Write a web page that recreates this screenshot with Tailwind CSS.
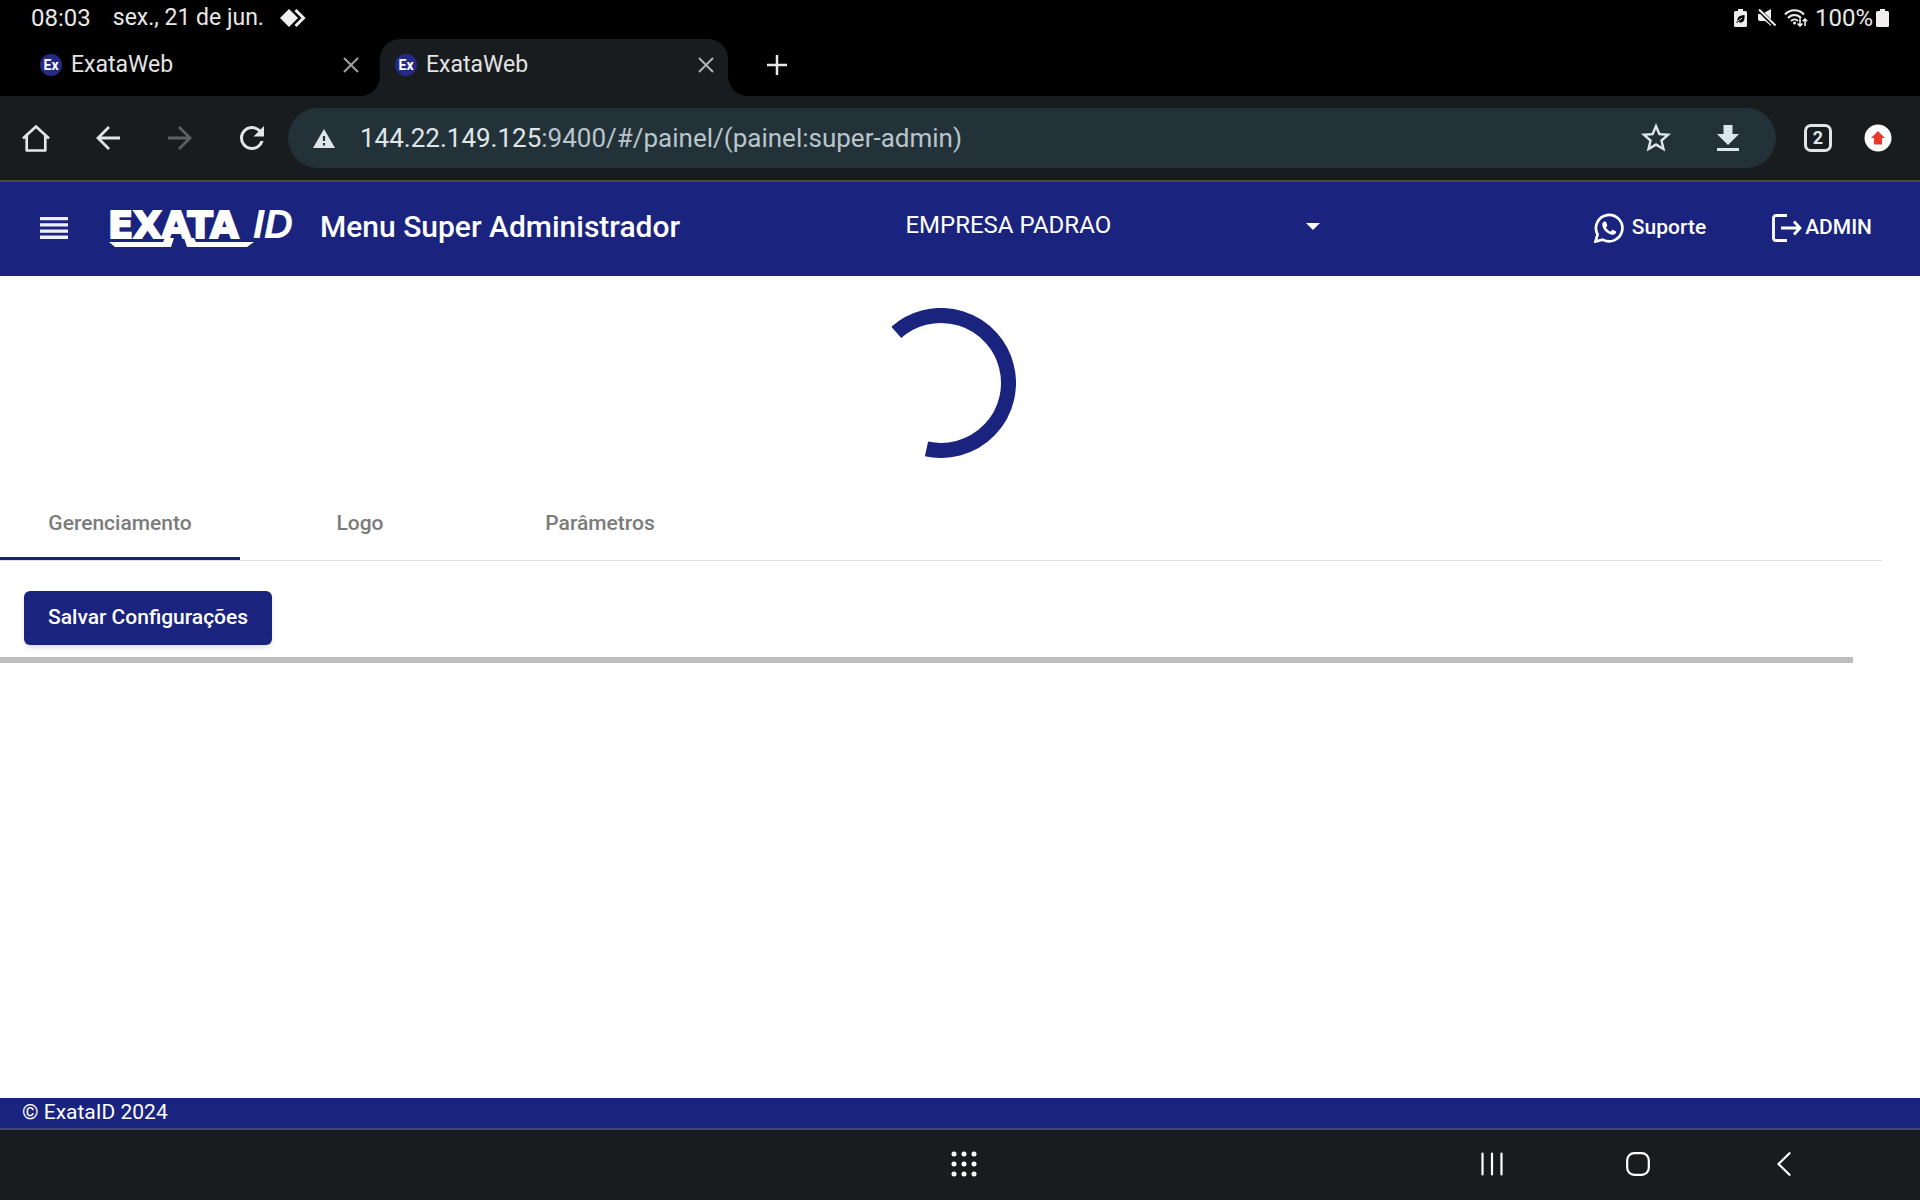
<!DOCTYPE html>
<html lang="pt-BR">
<head>
<meta charset="utf-8">
<title>ExataWeb</title>
<script src="https://cdn.jsdelivr.net/npm/@tailwindcss/browser@4"></script>
</head>
<body class="flex min-h-screen flex-col bg-white font-['Roboto',sans-serif]">

<!-- System status bar -->
<div class="flex h-[38px] items-center bg-black pr-[31px] pb-0.5 pl-[31px] text-2xl leading-9 text-[#e8e8e8]">
  <span>08:03</span>
  <span class="ml-[22px] text-[23px]">sex., 21 de jun.</span>
  <svg class="ml-4 h-5 w-[26px]" viewBox="0 0 26 20" aria-hidden="true">
    <path d="M9 1 18 10 9 19 0 10z" fill="#f0f0f0"/>
    <path d="M15.500 2 23.500 10 15.500 18" fill="none" stroke="#f0f0f0" stroke-width="3"/>
  </svg>
  <div class="ml-auto flex items-center">
    <svg class="h-[18px] w-[13px]" viewBox="0 0 13 18" aria-hidden="true">
      <path d="M4 0h5v2h2.500a1.500 1.500 0 0 1 1.500 1.500v13a1.500 1.500 0 0 1-1.500 1.500h-10a1.500 1.500 0 0 1-1.500-1.500v-13a1.500 1.500 0 0 1 1.500-1.500H4z" fill="#eee"/>
      <path d="M10.500 6c.5 5-1 7.500-4 7.500-1 0-1.800-.3-2.300-.8L3 14l-.8-.8 1.300-1.500C3 8 6 6.300 10.500 6z" fill="#000"/>
      <path d="M3.500 12.500 8 9" stroke="#eee"/>
    </svg>
    <svg class="ml-[11px] h-[18px] w-[18px]" viewBox="0 0 18 18" aria-hidden="true">
      <path d="M0 5h4l9-5v17L7 12H2a2 2 0 0 1-2-2z" fill="#eee"/>
      <path d="M1 1 17 17" stroke="#000" stroke-width="4"/>
      <path d="M1 .5 17.500 16.500" stroke="#eee" stroke-width="2"/>
    </svg>
    <svg class="ml-2 h-[18px] w-6" viewBox="0 0 24 18" fill="none" stroke="#eee" stroke-width="2" aria-hidden="true">
      <path d="M1 5.500C6-.2 15-.2 20 5.500M4 9c3.500-4 9.500-4 13 0M7 12c2-2 5-2 7 0"/>
      <circle cx="10.500" cy="14" r="1.500" fill="#eee" stroke="none"/>
      <path d="M16 9.500v7.500M13.500 14.500l2.500 2.500 2.500-2.500M21 17V10M18.800 12.200 21 10l2.200 2.200" stroke-width="1.600"/>
    </svg>
    <span class="ml-[7px]">100%</span>
    <svg class="ml-[3px] h-[18px] w-[13px]" viewBox="0 0 13 18" aria-hidden="true">
      <path d="M4 0h5v2h2.500a1.500 1.500 0 0 1 1.500 1.500v13a1.500 1.500 0 0 1-1.500 1.500h-10a1.500 1.500 0 0 1-1.500-1.500v-13a1.500 1.500 0 0 1 1.500-1.500H4z" fill="#eee"/>
    </svg>
  </div>
</div>

<!-- Browser tab strip -->
<div class="flex h-[58px] items-stretch gap-[7px] bg-black pl-[25px] text-[23px] text-[#e3e3e3]">
  <div class="flex w-[348px] items-center px-[14px] pb-1">
    <span class="ml-px flex size-[22px] items-center justify-center rounded-full bg-[#252a86] text-sm font-bold text-white">Ex</span>
    <span class="ml-[9px]">ExataWeb</span>
    <button class="ml-auto" aria-label="Fechar guia"><svg class="size-4" viewBox="0 0 16 16" stroke="#a0a0a0" stroke-width="2"><path d="M1 1 15 15M15 1 1 15"/></svg></button>
  </div>
  <div class="relative mt-px flex w-[348px] items-center rounded-t-[20px] bg-[#191c1f] px-[14px] pb-[5px]">
    <svg class="absolute bottom-0 -left-5 size-5" viewBox="0 0 20 20" aria-hidden="true"><path d="M20 0v20H0A20 20 0 0 0 20 0z" fill="#191c1f"/></svg>
    <svg class="absolute -right-5 bottom-0 size-5" viewBox="0 0 20 20" aria-hidden="true"><path d="M0 0v20h20A20 20 0 0 1 0 0z" fill="#191c1f"/></svg>
    <span class="ml-px flex size-[22px] items-center justify-center rounded-full bg-[#252a86] text-sm font-bold text-white">Ex</span>
    <span class="ml-[9px]">ExataWeb</span>
    <button class="ml-auto" aria-label="Fechar guia"><svg class="size-4" viewBox="0 0 16 16" stroke="#b0b3b5" stroke-width="2"><path d="M1 1 15 15M15 1 1 15"/></svg></button>
  </div>
  <button class="ml-8 pb-1" aria-label="Nova guia"><svg class="size-5" viewBox="0 0 20 20" stroke="#e8e8e8" stroke-width="2.500"><path d="M10 0v20M0 10h20"/></svg></button>
</div>

<!-- Browser toolbar -->
<div class="flex h-[86px] items-center border-b-2 border-[#464b4a] bg-[#191c1f] pr-6">
  <button class="flex w-[72px] justify-center" aria-label="Início"><svg class="size-7" viewBox="0 0 28 28" fill="none" stroke="#e0e6ea" stroke-width="2.700" stroke-linejoin="round"><path d="M1 14.500 14 2.500l13 12M4.700 12v14.500h18.600V12"/></svg></button>
  <button class="flex w-[72px] justify-center" aria-label="Voltar"><svg class="size-6" viewBox="0 0 24 24" fill="none" stroke="#e0e6ea" stroke-width="2.800"><path d="M24 12H2M13 1 2 12 13 23"/></svg></button>
  <button class="flex w-[72px] justify-center" aria-label="Avançar"><svg class="size-6" viewBox="0 0 24 24" fill="none" stroke="#5c6163" stroke-width="2.800"><path d="M0 12h22M11 1l11 11L11 23"/></svg></button>
  <button class="flex w-[72px] justify-center" aria-label="Recarregar"><svg class="size-[36px]" viewBox="0 0 24 24" fill="#e0e6ea"><path d="M17.650 6.350A7.960 7.960 0 0 0 12 4a8 8 0 1 0 7.730 10h-2.080A6 6 0 1 1 12 6c1.660 0 3.140.69 4.220 1.780L13 11h7V4z"/></svg></button>
  <div class="flex h-[60px] flex-1 items-center rounded-full bg-[#233238] pr-3 pl-6">
    <svg class="h-[19px] w-6 shrink-0" viewBox="0 0 24 19" aria-hidden="true"><path d="M12 0 23 19H1z" fill="#dfe6ea"/><path d="M12 7v5M12 14v2.500" stroke="#233238" stroke-width="2.200"/></svg>
    <div role="textbox" contenteditable="true" aria-label="Endereço" class="ml-6 flex-1 text-[26px] leading-9 text-[#b9c5cb]"><span class="text-[#e0e6ea]">144.22.149.125</span>:9400/#/painel/(painel:super-admin)</div>
    <button class="flex w-[72px] justify-center" aria-label="Favoritar"><svg class="size-[36px]" viewBox="0 0 24 24" fill="#dfe6ea"><path d="M22 9.240l-7.190-.62L12 2 9.190 8.630 2 9.240l5.460 4.730L5.820 21 12 17.270 18.180 21l-1.630-7.030L22 9.240zM12 15.400l-3.760 2.270 1-4.280-3.320-2.880 4.380-.38L12 6.100l1.710 4.040 4.380.38-3.320 2.880 1 4.280L12 15.400z"/></svg></button>
    <button class="flex w-[72px] justify-center" aria-label="Baixar"><svg class="h-[26px] w-[22px]" viewBox="0 0 22 26" fill="#dfe6ea"><path d="M6.500 0h9v9H22L11 20 0 9h6.500zM0 23h22v3H0z"/></svg></button>
  </div>
  <button class="flex w-[84px] justify-center" aria-label="Guias abertas"><span class="flex h-7 w-7 items-center justify-center rounded-[7px] border-3 border-[#dfe6ea] text-lg font-bold text-[#dfe6ea]">2</span></button>
  <button class="flex w-9 justify-center" aria-label="Atualização disponível"><svg class="size-7" viewBox="0 0 28 28"><circle cx="14" cy="14" r="13.500" fill="#fff"/><path d="M14 7 21 14h-3v6.500h-8V14H7z" fill="#e8392c"/></svg></button>
</div>

<!-- Application header -->
<header class="flex h-[94px] items-center bg-[#1a237e] pb-0.5 text-white">
  <div class="flex w-[47%] items-center pl-10">
    <button aria-label="Menu"><svg class="h-[22px] w-7" viewBox="0 0 28 22" fill="#eef1fb"><path d="M0 0h28v3.300H0zM0 6.200h28v3.300H0zM0 12.400h28v3.300H0zM0 18.600h28v3.300H0z"/></svg></button>
    <svg class="ml-9 h-[72px] w-[200px]" viewBox="-4 -16 200 72" role="img" aria-label="EXATAID" fill="#fff">
      <text x="0" y="30" stroke="#fff" stroke-width="2" class="font-['DejaVu_Sans',sans-serif] text-[37px] font-bold">EXATA</text>
      <text x="145" y="30" class="font-['Liberation_Sans',sans-serif] text-[40px] font-bold italic">ID</text>
      <path d="M1 34h54l2-4h9l-3 9H7zM76 30h10l2 4h58l-7 5H79z"/>
    </svg>
    <h1 class="ml-4 pb-0.5 text-3xl font-medium whitespace-nowrap">Menu Super Administrador</h1>
  </div>
  <div class="relative w-[22%] pb-1.5">
    <select aria-label="Empresa" class="w-full appearance-none bg-transparent pl-[3px] text-2xl"><option>EMPRESA PADRAO</option></select>
    <svg class="pointer-events-none absolute top-[14px] right-[5px] h-[7px] w-[14px]" viewBox="0 0 14 7" fill="#fff" aria-hidden="true"><path d="M0 0h14L7 7z"/></svg>
  </div>
  <nav class="flex flex-1 items-center justify-end gap-[66px] pr-12 text-[21px] font-medium">
    <a href="#" class="flex items-center gap-2"><svg class="size-[30px]" viewBox="0 0 30 30" fill="none" stroke="#fff"><path d="M1.500 28.500 3.600 21.500A13.200 13.200 0 1 1 8.600 26.600z" stroke-width="2.700"/><path d="M10.500 8.500c-.8 0-2.200 1-2.200 3.300 0 4.500 6 10 10.200 10 2.200 0 3.700-1.300 3.700-2.800 0-.6-3-2.200-3.600-2.200-.7 0-1.400 1.800-2 1.800-1 0-4.500-3-4.500-4.200 0-.6 1.200-1.200 1.200-1.900 0-.8-1.200-4-1.800-4z" fill="#fff" stroke="none"/></svg>Suporte</a>
    <a href="#" class="flex items-center gap-[3px]"><svg class="h-7 w-[30px]" viewBox="0 0 30 28" fill="none" stroke="#fff" stroke-width="2.800"><path d="M15 1.500H4A2.500 2.500 0 0 0 1.500 4v20A2.500 2.500 0 0 0 4 26.500h11M9 14h19M22 7.500 28 14l-6 6.500"/></svg>ADMIN</a>
  </nav>
</header>

<!-- Page content -->
<main class="flex-1 pt-8">
  <div class="flex justify-center pr-[38px]" role="progressbar" aria-label="Carregando">
    <svg class="size-[150px]" viewBox="-75 -75 150 150" fill="none" stroke="#1a237e" stroke-width="15"><path d="M-44.700 -50.600A67.500 67.500 0 1 1 -14.500 65.900"/></svg>
  </div>
  <div role="tablist" class="mt-[30px] mr-[38px] flex h-[73px] border-b border-[#dfdfdf] text-[21px] font-medium text-[#7b7b7b]">
    <button role="tab" aria-selected="true" class="w-60 border-b-3 border-[#1a237e] pt-[3px]">Gerenciamento</button>
    <button role="tab" class="w-60">Logo</button>
    <button role="tab" class="w-60">Parâmetros</button>
  </div>
  <button class="mt-[30px] ml-6 block h-[54px] rounded-md bg-[#1a237e] px-6 text-[21px] font-medium text-white shadow-md">Salvar Configurações</button>
  <hr class="mt-3 mr-[67px] border-t-6 border-[#bdbdbd]">
</main>

<footer class="h-8 border-b-2 border-[#41456f] bg-[#1a237e] pl-[22px] text-[21px] leading-7 text-white">© ExataID 2024</footer>

<!-- System navigation bar -->
<nav class="flex h-[70px] items-center bg-[#191c1f] pr-[63px] pb-0.5">
  <div class="w-[48%]"></div>
  <button class="flex w-[146px] justify-center" aria-label="Aplicativos"><svg class="size-[26px]" viewBox="0 0 26 26" fill="#fff"><circle cx="3" cy="3" r="2.500"/><circle cx="13" cy="3" r="2.500"/><circle cx="23" cy="3" r="2.500"/><circle cx="3" cy="13" r="2.500"/><circle cx="13" cy="13" r="2.500"/><circle cx="23" cy="13" r="2.500"/><circle cx="3" cy="23" r="2.500"/><circle cx="13" cy="23" r="2.500"/><circle cx="23" cy="23" r="2.500"/></svg></button>
  <button class="ml-auto flex w-[146px] justify-center" aria-label="Recentes"><svg class="h-6 w-[22px]" viewBox="0 0 22 24" stroke="#fff" stroke-width="2.200" stroke-linecap="round"><path d="M1.500 1.500v21M11 1.500v21M20.500 1.500v21"/></svg></button>
  <button class="flex w-[146px] justify-center" aria-label="Tela inicial"><svg class="size-6" viewBox="0 0 24 24" fill="none" stroke="#fff" stroke-width="2.200"><rect x="1.200" y="1.200" width="21.600" height="21.600" rx="7"/></svg></button>
  <button class="flex w-[146px] justify-center" aria-label="Voltar"><svg class="h-6 w-[14px]" viewBox="0 0 14 24" fill="none" stroke="#fff" stroke-width="2.200" stroke-linecap="round"><path d="M12.500 1.200 1.500 12l11 10.800"/></svg></button>
</nav>
</body>
</html>
